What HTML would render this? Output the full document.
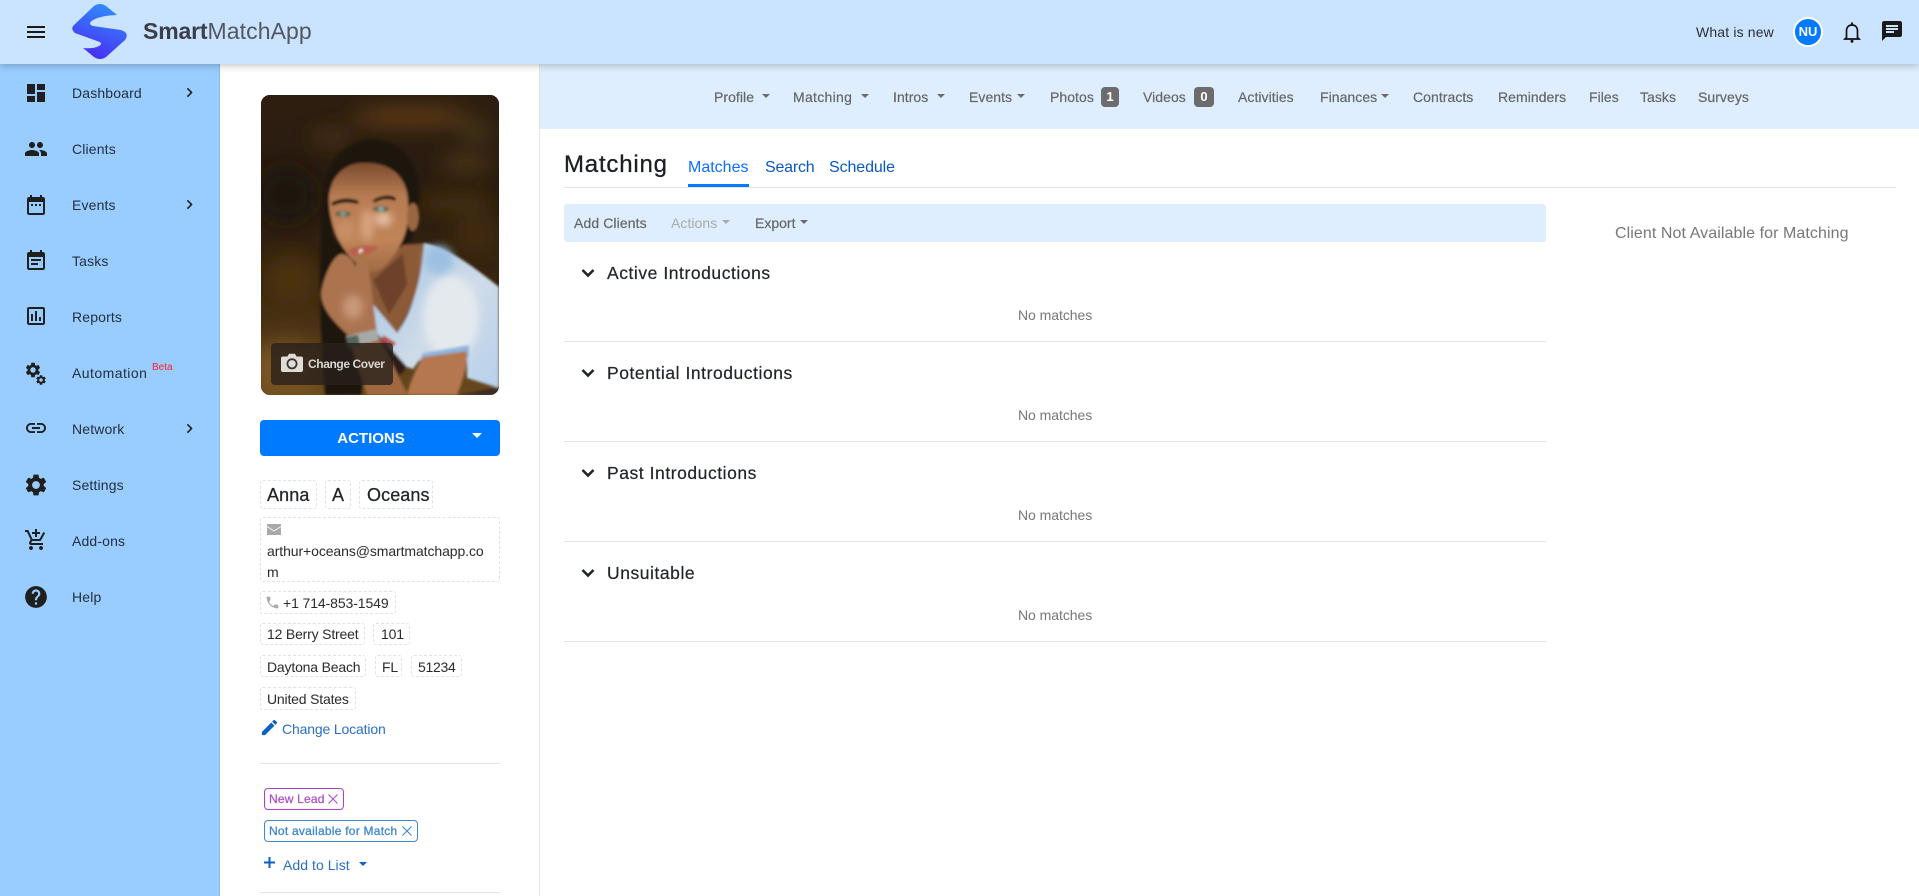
<!DOCTYPE html>
<html lang="en">
<head>
<meta charset="utf-8">
<title>SmartMatchApp</title>
<style>
html,body{margin:0;padding:0;width:1919px;height:896px;overflow:hidden;background:#fff;font-family:"Liberation Sans",Arial,sans-serif;color:#212529}
*{box-sizing:border-box}
.a{position:absolute}
.t{position:absolute;white-space:nowrap;line-height:20px;height:20px;font-size:14px}
.s{color:#24303d;font-size:14px;letter-spacing:.15px}
.n{color:#666;font-size:14px;letter-spacing:.05px;-webkit-text-stroke:.2px #666}
.c{position:absolute;border:1px dashed #e2e2e2;border-radius:3px}
.sec{color:#212529;font-size:17.5px;letter-spacing:.55px;line-height:24px;height:24px;-webkit-text-stroke:.2px #212529}
.nm{color:#777;font-size:14px;letter-spacing:-.05px}
.hr{position:absolute;height:1px;background:#e3e3e3}
.car{position:absolute;width:0;height:0;border-left:4px solid transparent;border-right:4px solid transparent;border-top:4.5px solid #6b6b6b}
svg.i{position:absolute;fill:#1f1f1f}
.d{color:#2b2b2b;font-size:14px;letter-spacing:-.18px}
.nm18{font-size:18px;-webkit-text-stroke:.25px #212529}
</style>
</head>
<body>
<svg width="0" height="0" style="position:absolute"><defs>
<symbol id="gear" viewBox="0 0 24 24"><path d="M19.14 12.94c.04-.3.06-.61.06-.94 0-.32-.02-.64-.07-.94l2.03-1.58a.49.49 0 0 0 .12-.61l-1.92-3.32a.488.488 0 0 0-.59-.22l-2.39.96c-.5-.38-1.03-.7-1.62-.94l-.36-2.54a.484.484 0 0 0-.48-.41h-3.84c-.24 0-.43.17-.47.41l-.36 2.54c-.59.24-1.13.57-1.62.94l-2.39-.96c-.22-.08-.47 0-.59.22L2.74 8.87c-.12.21-.08.47.12.61l2.03 1.58c-.05.3-.09.63-.09.94s.02.64.07.94l-2.03 1.58a.49.49 0 0 0-.12.61l1.92 3.32c.12.22.37.29.59.22l2.39-.96c.5.38 1.03.7 1.62.94l.36 2.54c.05.24.24.41.48.41h3.84c.24 0 .44-.17.47-.41l.36-2.54c.59-.24 1.13-.56 1.62-.94l2.39.96c.22.08.47 0 .59-.22l1.92-3.32c.12-.22.07-.47-.12-.61l-2.01-1.58zM12 15.6c-1.98 0-3.6-1.62-3.6-3.6s1.62-3.6 3.6-3.6 3.6 1.62 3.6 3.6-1.62 3.6-3.6 3.6z"/></symbol>
<symbol id="chev" viewBox="0 0 24 24"><path d="M10 6L8.59 7.41 13.17 12l-4.58 4.59L10 18l6-6z"/></symbol>
<symbol id="down" viewBox="0 0 16 16"><path d="M2.5 5 L8 10.5 L13.500 5" fill="none" stroke="#212529" stroke-width="2.6"/></symbol>
<linearGradient id="lg" x1="0.75" y1="0" x2="0.4" y2="1"><stop offset="0" stop-color="#2f90ff"/><stop offset="1" stop-color="#4a2cf2"/></linearGradient>
</defs></svg>

<!-- Sidebar -->
<div class="a" style="left:0;top:64px;width:220px;height:832px;background:#99ccff;border-right:1px solid #8ab9ea"></div>

<!-- Sidebar icons -->
<svg class="i" style="left:24px;top:81px" width="24" height="24" viewBox="0 0 24 24"><path d="M3 13h8V3H3v10zm0 8h8v-6H3v6zm10 0h8V11h-8v10zm0-18v6h8V3h-8z"/></svg>
<svg class="i" style="left:24px;top:137px" width="24" height="24" viewBox="0 0 24 24"><path d="M16 11c1.66 0 2.99-1.34 2.99-3S17.66 5 16 5c-1.66 0-3 1.34-3 3s1.34 3 3 3zm-8 0c1.66 0 2.99-1.34 2.99-3S9.66 5 8 5C6.34 5 5 6.34 5 8s1.34 3 3 3zm0 2c-2.33 0-7 1.17-7 3.5V19h14v-2.5c0-2.33-4.67-3.5-7-3.5zm8 0c-.29 0-.62.02-.97.05 1.16.84 1.97 1.97 1.97 3.45V19h6v-2.500c0-2.33-4.67-3.5-7-3.5z"/></svg>
<svg class="i" style="left:24px;top:193px" width="24" height="24" viewBox="0 0 24 24"><path d="M9 11H7v2h2v-2zm4 0h-2v2h2v-2zm4 0h-2v2h2v-2zm2-7h-1V2h-2v2H8V2H6v2H5c-1.11 0-1.99.9-1.99 2L3 20c0 1.1.89 2 2 2h14c1.1 0 2-.9 2-2V6c0-1.1-.9-2-2-2zm0 16H5V9h14v11z"/></svg>
<svg class="i" style="left:24px;top:249px" width="24" height="24" viewBox="0 0 24 24"><path d="M17 10H7v2h10v-2zm2-7h-1V1h-2v2H8V1H6v2H5c-1.11 0-1.99.9-1.99 2L3 19c0 1.1.89 2 2 2h14c1.1 0 2-.9 2-2V5c0-1.1-.9-2-2-2zm0 16H5V8h14v11zm-5-5H7v2h7v-2z"/></svg>
<svg class="i" style="left:24px;top:304px" width="24" height="24" viewBox="0 0 24 24"><path d="M19 3H5c-1.1 0-2 .9-2 2v14c0 1.1.9 2 2 2h14c1.100 0 2-.9 2-2V5c0-1.1-.9-2-2-2zm0 16H5V5h14v14zM7 10h2v7H7zm4-3h2v10h-2zm4 6h2v4h-2z"/></svg>
<svg class="i" style="left:24px;top:361px" width="18" height="18"><use href="#gear"/></svg>
<svg class="i" style="left:35px;top:374px" width="12" height="12"><use href="#gear"/></svg>
<svg class="i" style="left:24px;top:416px" width="24" height="24" viewBox="0 0 24 24"><path d="M3.9 12c0-1.71 1.39-3.1 3.1-3.1h4V7H7c-2.76 0-5 2.24-5 5s2.24 5 5 5h4v-1.9H7c-1.71 0-3.1-1.39-3.1-3.1zM8 13h8v-2H8v2zm9-6h-4v1.9h4c1.71 0 3.1 1.39 3.1 3.1s-1.39 3.1-3.1 3.1h-4V17h4c2.76 0 5-2.24 5-5s-2.24-5-5-5z"/></svg>
<svg class="i" style="left:23px;top:472px" width="26" height="26"><use href="#gear"/></svg>
<svg class="i" style="left:24px;top:528px" width="24" height="24" viewBox="0 0 24 24"><path d="M11 9h2V6h3V4h-3V1h-2v3H8v2h3v3zm-4 9c-1.1 0-1.99.9-1.99 2S5.9 22 7 22s2-.9 2-2-.9-2-2-2zm10 0c-1.1 0-1.99.9-1.99 2s.89 2 1.99 2 2-.9 2-2-.9-2-2-2zm-9.83-3.25l.03-.12.9-1.63h7.45c.75 0 1.41-.41 1.75-1.03l3.86-7.01L19.42 4h-.01l-1.1 2-2.76 5H8.53l-.13-.27L6.16 6l-.95-2-.94-2H1v2h2l3.6 7.59-1.35 2.45c-.16.28-.25.61-.25.96 0 1.1.9 2 2 2h12v-2H7.42c-.13 0-.25-.11-.25-.25z"/></svg>
<svg class="i" style="left:23px;top:584px" width="26" height="26" viewBox="0 0 24 24"><path d="M12 2C6.48 2 2 6.48 2 12s4.48 10 10 10 10-4.48 10-10S17.52 2 12 2zm1 17h-2v-2h2v2zm2.070-7.750l-.9.92C13.45 12.9 13 13.5 13 15h-2v-.5c0-1.1.45-2.1 1.17-2.83l1.24-1.26c.37-.36.59-.86.59-1.41 0-1.1-.9-2-2-2s-2 .9-2 2H8c0-2.21 1.79-4 4-4s4 1.79 4 4c0 .88-.36 1.68-.93 2.25z"/></svg>

<svg class="i" style="left:180px;top:83px" width="19" height="19"><use href="#chev"/></svg>
<svg class="i" style="left:180px;top:195px" width="19" height="19"><use href="#chev"/></svg>
<svg class="i" style="left:180px;top:419px" width="19" height="19"><use href="#chev"/></svg>

<div class="t s" style="left:72px;top:83px">Dashboard</div>
<div class="t s" style="left:72px;top:139px">Clients</div>
<div class="t s" style="left:72px;top:195px">Events</div>
<div class="t s" style="left:72px;top:251px">Tasks</div>
<div class="t s" style="left:72px;top:307px">Reports</div>
<div class="t s" style="left:72px;top:363px;letter-spacing:.45px">Automation</div>
<div class="t" style="left:152px;top:358px;font-size:10px;color:#ff2222">Beta</div>
<div class="t s" style="left:72px;top:419px">Network</div>
<div class="t s" style="left:72px;top:475px">Settings</div>
<div class="t s" style="left:72px;top:531px">Add-ons</div>
<div class="t s" style="left:72px;top:587px">Help</div>

<!-- Left profile panel -->
<div class="a" style="left:539px;top:64px;width:1px;height:832px;background:#e6e6e6"></div>

<div class="a" style="left:261px;top:95px;width:238px;height:300px;border-radius:9px;overflow:hidden;background:#2e2013">
<svg width="238" height="300" viewBox="0 0 238 300" style="display:block">
<defs>
<linearGradient id="bg" x1="0" y1="0" x2="0" y2="1"><stop offset="0" stop-color="#2d1e10"/><stop offset=".35" stop-color="#281b10"/><stop offset=".65" stop-color="#3a2710"/><stop offset="1" stop-color="#6a4a1e"/></linearGradient>
<filter id="b10" x="-30%" y="-30%" width="160%" height="160%"><feGaussianBlur stdDeviation="10"/></filter>
<filter id="b4" x="-30%" y="-30%" width="160%" height="160%"><feGaussianBlur stdDeviation="4"/></filter>
<filter id="b2" x="-10%" y="-10%" width="120%" height="120%"><feGaussianBlur stdDeviation="1.4"/></filter>
<linearGradient id="fc" x1="0" y1="0" x2="0" y2="1"><stop offset="0" stop-color="#7b4c2e"/><stop offset=".3" stop-color="#b67b52"/><stop offset=".7" stop-color="#c08558"/><stop offset="1" stop-color="#a06a44"/></linearGradient>
<linearGradient id="sh" x1="0" y1="0" x2="1" y2="1"><stop offset="0" stop-color="#9fc3e4"/><stop offset=".55" stop-color="#cfdbe8"/><stop offset="1" stop-color="#b7d1ec"/></linearGradient>
</defs>
<rect width="238" height="300" fill="url(#bg)"/>
<g filter="url(#b10)">
<ellipse cx="150" cy="22" rx="60" ry="10" fill="#5f3a14"/>
<ellipse cx="215" cy="36" rx="16" ry="5" fill="#5c4f20"/>
<ellipse cx="70" cy="42" rx="22" ry="8" fill="#4e3115"/>
<ellipse cx="205" cy="68" rx="26" ry="10" fill="#4e3412"/>
<ellipse cx="195" cy="108" rx="40" ry="9" fill="#4a3110"/>
<ellipse cx="25" cy="100" rx="30" ry="28" fill="#1b1410"/>
<ellipse cx="30" cy="185" rx="28" ry="26" fill="#4b300f"/>
<ellipse cx="25" cy="275" rx="36" ry="28" fill="#7a5421"/>
<ellipse cx="215" cy="140" rx="24" ry="18" fill="#432c10"/>
</g>
<g filter="url(#b2)">
<!-- hair -->
<path d="M60 235 C58 180 60 125 64 90 C70 58 92 44 112 45 C138 45 156 66 158 95 C159 112 154 132 148 152 L120 195 L100 300 L64 300 Z" fill="#1b120d"/>
<!-- neck and chest -->
<path d="M105 178 L142 150 L165 148 L155 200 L136 238 L112 214 Z" fill="#8d5a38"/>
<path d="M112 185 L142 158 L146 190 L128 220 Z" fill="#6e4329"/>
<!-- shirt -->
<path d="M163 148 C182 150 208 168 238 192 L238 293 L206 283 L206 256 L162 260 L152 274 L146 272 L114 236 L112 209 L136 238 C150 218 160 190 163 148 Z" fill="url(#sh)"/>
<ellipse cx="190" cy="222" rx="28" ry="42" fill="#e4e9ee" filter="url(#b4)"/>
<ellipse cx="178" cy="165" rx="14" ry="14" fill="#9cc0e2" filter="url(#b4)"/>
<path d="M162 258 L208 250 L208 262 L158 266 Z" fill="#8db6de"/>
<path d="M114 236 L146 272 L130 290 L112 285 Z" fill="#2f1f18"/>
<path d="M122 240 L135 248 L132 252 L120 246 Z" fill="#b44a4a"/>
<!-- right arm -->
<path d="M162 262 L206 256 C207 270 202 285 196 300 L146 300 C150 284 156 272 162 262 Z" fill="#b57750"/>
<path d="M196 300 L238 292 L238 300 Z" fill="#3a2a26"/>
<!-- face -->
<path d="M68 105 C68 82 84 66 106 68 C132 68 147 84 147 108 C150 128 142 150 130 164 C122 175 114 178 108 177 C96 172 84 158 76 142 C71 130 68 118 68 105 Z" fill="url(#fc)"/>
<ellipse cx="152" cy="122" rx="6" ry="14" fill="#9a6642"/>
<ellipse cx="106" cy="130" rx="6" ry="16" fill="#dca684" filter="url(#b4)"/>
<ellipse cx="122" cy="124" rx="9" ry="7" fill="#e6c0a4" filter="url(#b4)"/>
<ellipse cx="85" cy="135" rx="9" ry="10" fill="#c88f68" filter="url(#b4)"/>
<!-- brows -->
<path d="M70 108 C80 102 90 103 98 106 L97 109 C87 107 80 107 72 111 Z" fill="#20120c"/>
<path d="M112 105 C120 100 130 99 135 103 L134 106 C127 103 120 104 113 108 Z" fill="#20120c"/>
<!-- eyes -->
<ellipse cx="82" cy="119" rx="8" ry="3" fill="#6b6652"/><ellipse cx="82" cy="119" rx="3" ry="2.600" fill="#7c9a8e"/>
<ellipse cx="120" cy="114" rx="8" ry="3" fill="#6b6652"/><ellipse cx="120" cy="114" rx="3" ry="2.600" fill="#86a89c"/>
<!-- lips -->
<path d="M87 155 C96 150 110 149 118 152 C112 159 100 163 92 161 Z" fill="#b9604e"/>
<rect x="98" y="154" width="4" height="9" rx="2" fill="#f2ece4"/>
<!-- hand -->
<path d="M60 198 C62 186 70 162 80 159 C88 159 92 166 95 172 C95 163 98 157 102 156 C106 160 108 178 110 190 C112 205 114 225 116 236 L87 240 C74 228 60 214 60 198 Z" fill="#ac7350"/>
<ellipse cx="92" cy="212" rx="10" ry="12" fill="#c99a7c" filter="url(#b4)"/>
<!-- forearm -->
<path d="M88 244 L117 240 L147 300 L106 300 Z" fill="#a0683f"/>
<!-- watch -->
<path d="M85 241 L116 234 L118 245 L90 252 Z" fill="#a5aaa6"/>
<rect x="86" y="241" width="12" height="11" rx="1" fill="#56625b" transform="rotate(-12 92 246)"/>
</g>
</svg>
</div>
<div class="a" style="left:271px;top:343px;width:122px;height:42px;background:rgba(40,32,28,.8);border-radius:4px"></div>
<svg class="a" style="left:281px;top:353px" width="22" height="19" viewBox="0 0 22 19"><path d="M2 3.500h4.500L8 .8h6l1.500 2.700H20a2 2 0 0 1 2 2V17a2 2 0 0 1-2 2H2a2 2 0 0 1-2-2V5.500a2 2 0 0 1 2-2z" fill="#e2dcd6"/><circle cx="11" cy="10.800" r="4.600" fill="none" stroke="#3d3430" stroke-width="1.800"/></svg>
<div class="t" style="left:308px;top:354px;font-size:12px;font-weight:bold;color:#dbd6d1;letter-spacing:-.4px">Change Cover</div>

<div class="a" style="left:260px;top:420px;width:240px;height:36px;background:#007bff;border-radius:4px"></div>
<div class="t" style="left:327px;top:429px;font-size:15px;font-weight:bold;color:#fff;width:88px;text-align:center">ACTIONS</div>
<div class="car" style="left:472px;top:433px;border-top-color:#fff;border-left-width:5.500px;border-right-width:5.500px;border-top-width:5px"></div>

<div class="c" style="left:260px;top:480px;width:57px;height:29px"></div>
<div class="t nm18" style="left:267px;top:485px;letter-spacing:.1px">Anna</div>
<div class="c" style="left:325px;top:480px;width:26px;height:29px"></div>
<div class="t nm18" style="left:332px;top:485px">A</div>
<div class="c" style="left:359px;top:480px;width:74px;height:29px"></div>
<div class="t nm18" style="left:367px;top:485px;letter-spacing:.1px">Oceans</div>

<div class="c" style="left:260px;top:517px;width:240px;height:65px"></div>
<svg class="a" style="left:267px;top:524px" width="14" height="11" viewBox="0 0 14 11"><path d="M0 0h14v2L7 6.500 0 2z" fill="#aaa"/><path d="M0 3l7 4.500L14 3v8H0z" fill="#aaa"/></svg>
<div class="t d" style="left:267px;top:541px;letter-spacing:-.09px">arthur+oceans@smartmatchapp.co</div>
<div class="t d" style="left:267px;top:562px">m</div>

<div class="c" style="left:260px;top:591px;width:136px;height:23px"></div>
<svg class="a" style="left:266px;top:596px;fill:#aaa" width="13" height="13" viewBox="2 2 20 20"><path d="M6.620 10.790c1.440 2.830 3.760 5.140 6.590 6.590l2.200-2.200c.27-.27.67-.36 1.020-.24 1.120.37 2.330.57 3.570.57.55 0 1 .45 1 1V20c0 .55-.45 1-1 1-9.390 0-17-7.610-17-17 0-.55.45-1 1-1h3.500c.55 0 1 .45 1 1 0 1.250.2 2.450.57 3.570.11.35.03.74-.25 1.020l-2.200 2.200z"/></svg>
<div class="t d" style="left:283px;top:593px;letter-spacing:-.1px">+1 714-853-1549</div>

<div class="c" style="left:260px;top:623px;width:105px;height:22px"></div>
<div class="t d" style="left:267px;top:624px">12 Berry Street</div>
<div class="c" style="left:373px;top:623px;width:37px;height:22px"></div>
<div class="t d" style="left:381px;top:624px">101</div>

<div class="c" style="left:260px;top:655px;width:106px;height:22px"></div>
<div class="t d" style="left:267px;top:657px">Daytona Beach</div>
<div class="c" style="left:375px;top:655px;width:27px;height:22px"></div>
<div class="t d" style="left:382px;top:657px">FL</div>
<div class="c" style="left:411px;top:655px;width:51px;height:22px"></div>
<div class="t d" style="left:418px;top:657px;letter-spacing:-.3px">51234</div>

<div class="c" style="left:260px;top:687px;width:96px;height:23px"></div>
<div class="t d" style="left:267px;top:689px">United States</div>

<svg class="a" style="left:261px;top:719px;fill:#0f5fc4" width="17" height="17" viewBox="2 2 20 20"><path d="M3 17.250V21h3.750L17.810 9.940l-3.750-3.750L3 17.250zM20.710 7.040c.39-.39.39-1.020 0-1.410l-2.340-2.340c-.39-.39-1.020-.39-1.410 0l-1.830 1.830 3.750 3.750 1.830-1.830z"/></svg>
<div class="t" style="left:282px;top:719px;color:#2a6fc4;letter-spacing:-.15px">Change Location</div>

<div class="hr" style="left:260px;top:763px;width:240px"></div>

<div class="a" style="left:264px;top:788px;width:80px;height:22px;border:1px solid #ad3fcb;border-radius:4px"></div>
<div class="t" style="left:269px;top:789px;font-size:12px;color:#ad4fcb;letter-spacing:.2px;-webkit-text-stroke:.25px #ad4fcb">New Lead</div>
<svg class="a" style="left:328px;top:794px" width="10" height="10" viewBox="0 0 10 10"><path d="M.5.5l9 9M9.500.5l-9 9" stroke="#ad4fcb" stroke-width="1.100"/></svg>

<div class="a" style="left:264px;top:820px;width:154px;height:22px;border:1px solid #3f88d0;border-radius:4px"></div>
<div class="t" style="left:269px;top:821px;font-size:12px;color:#3f88d0;letter-spacing:.25px;-webkit-text-stroke:.3px #3f88d0">Not available for Match</div>
<svg class="a" style="left:402px;top:826px" width="10" height="10" viewBox="0 0 10 10"><path d="M.5.5l9 9M9.500.5l-9 9" stroke="#3f88d0" stroke-width="1.100"/></svg>

<svg class="a" style="left:264px;top:857px" width="11" height="11" viewBox="0 0 11 11"><path d="M4.500 0h2v4.500H11v2H6.500V11h-2V6.500H0v-2h4.500z" fill="#0f5fc4"/></svg>
<div class="t" style="left:283px;top:855px;color:#2a6fc4;letter-spacing:.05px">Add to List</div>
<div class="car" style="left:359px;top:862px;border-top-color:#0f5fc4;border-left-width:4.500px;border-right-width:4.500px"></div>

<div class="hr" style="left:260px;top:892px;width:240px"></div>

<!-- Sub nav -->
<div class="a" style="left:540px;top:64px;width:1379px;height:65px;background:#deeeff"></div>
<div class="t n" style="left:714px;top:87px">Profile</div><div class="car" style="left:762px;top:94px"></div>
<div class="t n" style="left:793px;top:87px;letter-spacing:.3px">Matching</div><div class="car" style="left:861px;top:94px"></div>
<div class="t n" style="left:893px;top:87px">Intros</div><div class="car" style="left:937px;top:94px"></div>
<div class="t n" style="left:969px;top:87px">Events</div><div class="car" style="left:1017px;top:94px"></div>
<div class="t n" style="left:1050px;top:87px">Photos</div>
<div class="a" style="left:1101px;top:87px;width:18px;height:20px;background:#6c6c6c;border-radius:4px;color:#fff;font-size:13px;font-weight:bold;line-height:20px;text-align:center">1</div>
<div class="t n" style="left:1143px;top:87px">Videos</div>
<div class="a" style="left:1194px;top:87px;width:20px;height:20px;background:#6c6c6c;border-radius:4px;color:#fff;font-size:13px;font-weight:bold;line-height:20px;text-align:center">0</div>
<div class="t n" style="left:1238px;top:87px">Activities</div>
<div class="t n" style="left:1320px;top:87px">Finances</div><div class="car" style="left:1381px;top:94px"></div>
<div class="t n" style="left:1413px;top:87px">Contracts</div>
<div class="t n" style="left:1498px;top:87px">Reminders</div>
<div class="t n" style="left:1589px;top:87px">Files</div>
<div class="t n" style="left:1640px;top:87px">Tasks</div>
<div class="t n" style="left:1698px;top:87px">Surveys</div>

<!-- Header -->
<div class="a" style="left:0;top:0;width:1919px;height:64px;background:#cae3ff;box-shadow:0 2px 7px rgba(0,0,0,.22)"></div>
<svg class="a" style="left:27px;top:26px" width="18" height="12" viewBox="0 0 18 12"><path d="M0 0h18v2H0zM0 5h18v2H0zM0 10h18v2H0z" fill="#1a1a1a"/></svg>
<svg class="a" style="left:0;top:0" width="140" height="64" viewBox="0 0 140 64"><path d="M94 6Q100 2 106 6L117 15Q103 15 93 20Q87 24 93 26L121 30Q130 33 125 40L106 57Q100 61 94 57L83 48Q93 49 99 46Q104 43 97 41L75 33Q70 29 74 25Z" fill="url(#lg)"/></svg>
<div class="t" style="left:143px;top:21px;font-size:23px;font-weight:bold;color:#3b3e46;letter-spacing:-.15px">Smart<span style="font-weight:normal;color:#54575e;letter-spacing:.1px">MatchApp</span></div>

<div class="t" style="left:1696px;top:22px;color:#2b2f36;letter-spacing:.15px">What is new</div>
<div class="a" style="left:1793px;top:17px;width:30px;height:30px;border-radius:50%;background:#007bff;border:2px solid #fff;color:#fff;font-weight:bold;font-size:13px;line-height:26px;text-align:center">NU</div>
<svg class="a" style="left:1840px;top:20px" width="24" height="24" viewBox="0 0 24 24"><path d="M6.500 17.500V11C6.500 7.500 8.500 5 12 5s5.500 2.500 5.500 6v6.500l1.500 1.500H5z" fill="none" stroke="#111" stroke-width="1.700"/><path d="M12 2.500v2.500" stroke="#111" stroke-width="2"/><circle cx="12" cy="21.300" r="1.500" fill="#111"/></svg>
<svg class="i" style="left:1880px;top:19px;fill:#1a1a1a" width="24" height="24" viewBox="0 0 24 24"><path d="M20 2H4c-1.100 0-1.990.9-1.990 2L2 22l4-4h14c1.100 0 2-.9 2-2V4c0-1.100-.9-2-2-2zM6 9h12v2H6V9zm8 5H6v-2h8v2zm4-6H6V6h12v2z"/></svg>

<!-- Main content -->
<div class="t" style="left:564px;top:150px;height:30px;line-height:30px;font-size:24px;color:#1d2025;letter-spacing:.8px;-webkit-text-stroke:.3px #1d2025">Matching</div>
<div class="t" style="left:688px;top:158px;font-size:16px;color:#0d6efd">Matches</div>
<div class="t" style="left:765px;top:158px;font-size:16px;color:#0a58c8;letter-spacing:-.2px">Search</div>
<div class="t" style="left:829px;top:158px;font-size:16px;color:#0a58c8;letter-spacing:-.1px">Schedule</div>
<div class="a" style="left:688px;top:184px;width:61px;height:3px;background:#007bff"></div>
<div class="hr" style="left:564px;top:187px;width:1332px"></div>

<div class="a" style="left:564px;top:204px;width:982px;height:38px;background:#deeeff;border-radius:3px"></div>
<div class="t" style="left:574px;top:213px;color:#666;letter-spacing:.1px;-webkit-text-stroke:.2px #666">Add Clients</div>
<div class="t" style="left:671px;top:213px;color:#aaa;letter-spacing:.05px">Actions</div><div class="car" style="left:722px;top:220px;border-top-color:#aaa"></div>
<div class="t" style="left:755px;top:213px;color:#666;-webkit-text-stroke:.2px #666">Export</div><div class="car" style="left:800px;top:220px"></div>

<div class="t" style="left:1615px;top:224px;font-size:16px;color:#777;letter-spacing:.08px">Client Not Available for Matching</div>

<svg class="a" style="left:580px;top:265px" width="16" height="16"><use href="#down"/></svg>
<div class="t sec" style="left:607px;top:261px">Active Introductions</div>
<div class="t nm" style="left:1018px;top:305px">No matches</div>
<div class="hr" style="left:564px;top:341px;width:982px"></div>

<svg class="a" style="left:580px;top:365px" width="16" height="16"><use href="#down"/></svg>
<div class="t sec" style="left:607px;top:361px">Potential Introductions</div>
<div class="t nm" style="left:1018px;top:405px">No matches</div>
<div class="hr" style="left:564px;top:441px;width:982px"></div>

<svg class="a" style="left:580px;top:465px" width="16" height="16"><use href="#down"/></svg>
<div class="t sec" style="left:607px;top:461px">Past Introductions</div>
<div class="t nm" style="left:1018px;top:505px">No matches</div>
<div class="hr" style="left:564px;top:541px;width:982px"></div>

<svg class="a" style="left:580px;top:565px" width="16" height="16"><use href="#down"/></svg>
<div class="t sec" style="left:607px;top:561px">Unsuitable</div>
<div class="t nm" style="left:1018px;top:605px">No matches</div>
<div class="hr" style="left:564px;top:641px;width:982px"></div>
</body>
</html>
